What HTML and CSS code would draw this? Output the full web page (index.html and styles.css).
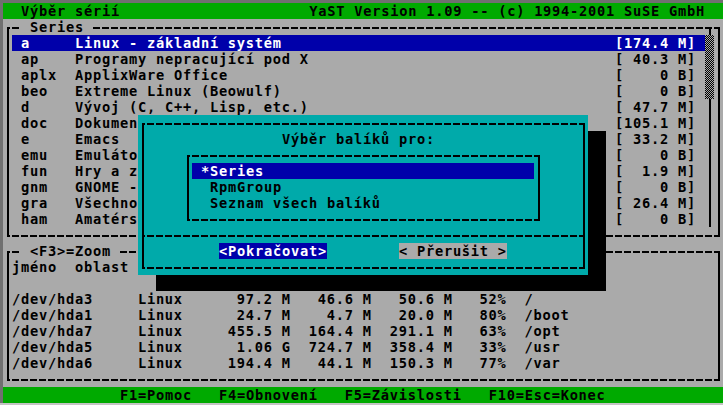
FILE: index.html
```html
<!DOCTYPE html>
<html lang="cs">
<head>
<meta charset="utf-8">
<title>YaST – Výběr sérií</title>
<link rel="stylesheet" href="styles.css">
</head>
<body>
<div class="monitor">
  <div class="screen">
    <header class="bar topbar"><span class="txt">Výběr sérií</span><span class="txt">YaST Version 1.09 -- (c) 1994-2001 SuSE GmbH</span></header>

    <section class="box series">
      <div class="caption"><span class="label"> Series </span></div>
      <div class="series-body">
        <ul class="list">
          <li class="item sel"><span class="key">a</span><span class="name">Linux - základní systém</span><span class="size">[174.4 M]</span></li>
          <li class="item"><span class="key">ap</span><span class="name">Programy nepracující pod X</span><span class="size">[ 40.3 M]</span></li>
          <li class="item"><span class="key">aplx</span><span class="name">ApplixWare Office</span><span class="size">[    0 B]</span></li>
          <li class="item"><span class="key">beo</span><span class="name">Extreme Linux (Beowulf)</span><span class="size">[    0 B]</span></li>
          <li class="item"><span class="key">d</span><span class="name">Vývoj (C, C++, Lisp, etc.)</span><span class="size">[ 47.7 M]</span></li>
          <li class="item"><span class="key">doc</span><span class="name">Dokumen</span><span class="size">[105.1 M]</span></li>
          <li class="item"><span class="key">e</span><span class="name">Emacs</span><span class="size">[ 33.2 M]</span></li>
          <li class="item"><span class="key">emu</span><span class="name">Emuláto</span><span class="size">[    0 B]</span></li>
          <li class="item"><span class="key">fun</span><span class="name">Hry a z</span><span class="size">[  1.9 M]</span></li>
          <li class="item"><span class="key">gnm</span><span class="name">GNOME -</span><span class="size">[    0 B]</span></li>
          <li class="item"><span class="key">gra</span><span class="name">Všechno</span><span class="size">[ 26.4 M]</span></li>
          <li class="item"><span class="key">ham</span><span class="name">Amatérs</span><span class="size">[    0 B]</span></li>
        </ul>
        <div class="scroll"><div class="thumb"></div></div>
      </div>
    </section>

    <section class="box disks">
      <div class="caption"><span class="label"> &lt;F3&gt;=Zoom </span></div>
      <div class="disk-body">
        <div class="line">jméno  oblast</div>
        <div class="line"></div>
        <div class="line">/dev/hda3     Linux      97.2 M   46.6 M   50.6 M   52%  /</div>
        <div class="line">/dev/hda1     Linux      24.7 M    4.7 M   20.0 M   80%  /boot</div>
        <div class="line">/dev/hda7     Linux     455.5 M  164.4 M  291.1 M   63%  /opt</div>
        <div class="line">/dev/hda5     Linux      1.06 G  724.7 M  358.4 M   33%  /usr</div>
        <div class="line">/dev/hda6     Linux     194.4 M   44.1 M  150.3 M   77%  /var</div>
      </div>
    </section>

    <footer class="bar status">F1=Pomoc   F4=Obnovení   F5=Závislosti   F10=Esc=Konec</footer>

    <div class="dialog box">
      <div class="row"></div>
      <div class="row dlg-title">Výběr balíků pro:</div>
      <div class="box choices">
        <div class="choice sel"> *Series</div>
        <div class="choice">  RpmGroup</div>
        <div class="choice">  Seznam všech balíků</div>
      </div>
      <div class="row sep"></div>
      <div class="row buttons"><span class="btn focus">&lt;Pokračovat&gt;</span><span class="btn">&lt; Přerušit &gt;</span></div>
      <div class="row"></div>
    </div>
  </div>
</div>
</body>
</html>
```

FILE: styles.css
```css
html, body {
  margin: 0;
  padding: 0;
  background: #707070;
}

.monitor {
  width: 723px;
  height: 405px;
  padding: 3px 0 0 3px;
  box-sizing: border-box;
  border-bottom: 2px solid #c4c4c4;
  background: #707070;
}

/* 80x25 text screen: 9x16 character cells */
.screen {
  position: relative;
  width: 720px;
  height: 400px;
  overflow: hidden;
  background: #aaaaaa;
  color: #000;
  font-family: "DejaVu Sans Mono", "Liberation Mono", monospace;
  font-weight: bold;
  font-size: 13.7px;
  letter-spacing: 0.752px;
  line-height: 16px;
}

/* leaf text keeps its spaces, as on a text screen */
.txt, .label, .key, .name, .size, .line, .status, .dlg-title, .choice, .btn {
  white-space: pre;
}

/* bars */
.bar {
  height: 16px;
  background: #00aa00;
  color: #000;
}
.topbar {
  display: flex;
  justify-content: space-between;
  padding: 0 18px;
}
.status {
  padding-left: 117px;
}

/* frames (dashed text-mode box lines) */
.box {
  position: relative;
}
.box::before {
  content: "";
  position: absolute;
  left: 4px;
  top: 8px;
  right: 3px;
  bottom: 6px;
  border-left: 2px solid #000;
  border-right: 2px solid #000;
  background-image:
    repeating-linear-gradient(90deg, #000 0 3px, transparent 3px 5px, #000 5px 9px),
    repeating-linear-gradient(90deg, #000 0 3px, transparent 3px 5px, #000 5px 9px);
  background-size: 100% 2px, 100% 2px;
  background-position: 0 0, 0 100%;
  background-repeat: no-repeat;
  background-origin: border-box;
  pointer-events: none;
}

.caption {
  height: 16px;
}
.label {
  position: relative;
  margin-left: 18px;
  background: #aaaaaa;
}

/* series box */
.series {
  height: 224px;
  box-sizing: border-box;
  padding-bottom: 16px;
}
.series-body {
  display: flex;
  height: 192px;
}
.list {
  list-style: none;
  margin: 0 0 0 9px;
  padding: 0;
  width: 693px;
}
.item {
  display: flex;
  height: 16px;
  padding-left: 9px;
}
.item.sel {
  background: #0000aa;
  color: #fff;
}
.key {
  width: 54px;
  flex: none;
}
.name {
  flex: none;
}
.size {
  flex: none;
  margin-left: auto;
  margin-right: 9px;
}
.scroll {
  position: relative;
  width: 9px;
  background: linear-gradient(#000, #000) 4px 0 / 2px 100% no-repeat;
}
.scroll::before {
  content: "";
  position: absolute;
  left: 4px;
  top: -8px;
  width: 2px;
  height: 8px;
  background: #000;
}
.thumb {
  height: 64px;
  background:
    conic-gradient(#000 25%, #aaaaaa 0 50%, #000 0 75%, #aaaaaa 0) 0 0 / 2px 2px;
}

/* disks box */
.disks {
  height: 144px;
  box-sizing: border-box;
  padding-bottom: 16px;
}
.disk-body {
  padding-left: 9px;
}
.line {
  height: 16px;
  width: fit-content;
}

/* dialog */
.dialog {
  position: absolute;
  left: 135px;
  top: 112px;
  width: 450px;
  height: 160px;
  background: #00aaaa;
  box-shadow: 18px 16px 0 #000;
}
.row {
  height: 16px;
}
.dlg-title {
  padding-left: 144px;
}
.choices {
  margin-left: 45px;
  width: 360px;
  height: 80px;
  box-sizing: border-box;
  padding: 16px 9px;
}
.choice {
  height: 16px;
}
.choice.sel {
  background: #0000aa;
  color: #fff;
}
.sep {
  margin: 0 3px 0 4px;
  background: repeating-linear-gradient(90deg, #000 0 3px, transparent 3px 5px, #000 5px 9px) 0 8px / 100% 2px no-repeat;
}
.buttons {
  display: flex;
  gap: 72px;
  padding-left: 81px;
}
.btn {
  background: #aaaaaa;
  color: #000;
}
.btn.focus {
  background: #0000aa;
  color: #fff;
}
```
